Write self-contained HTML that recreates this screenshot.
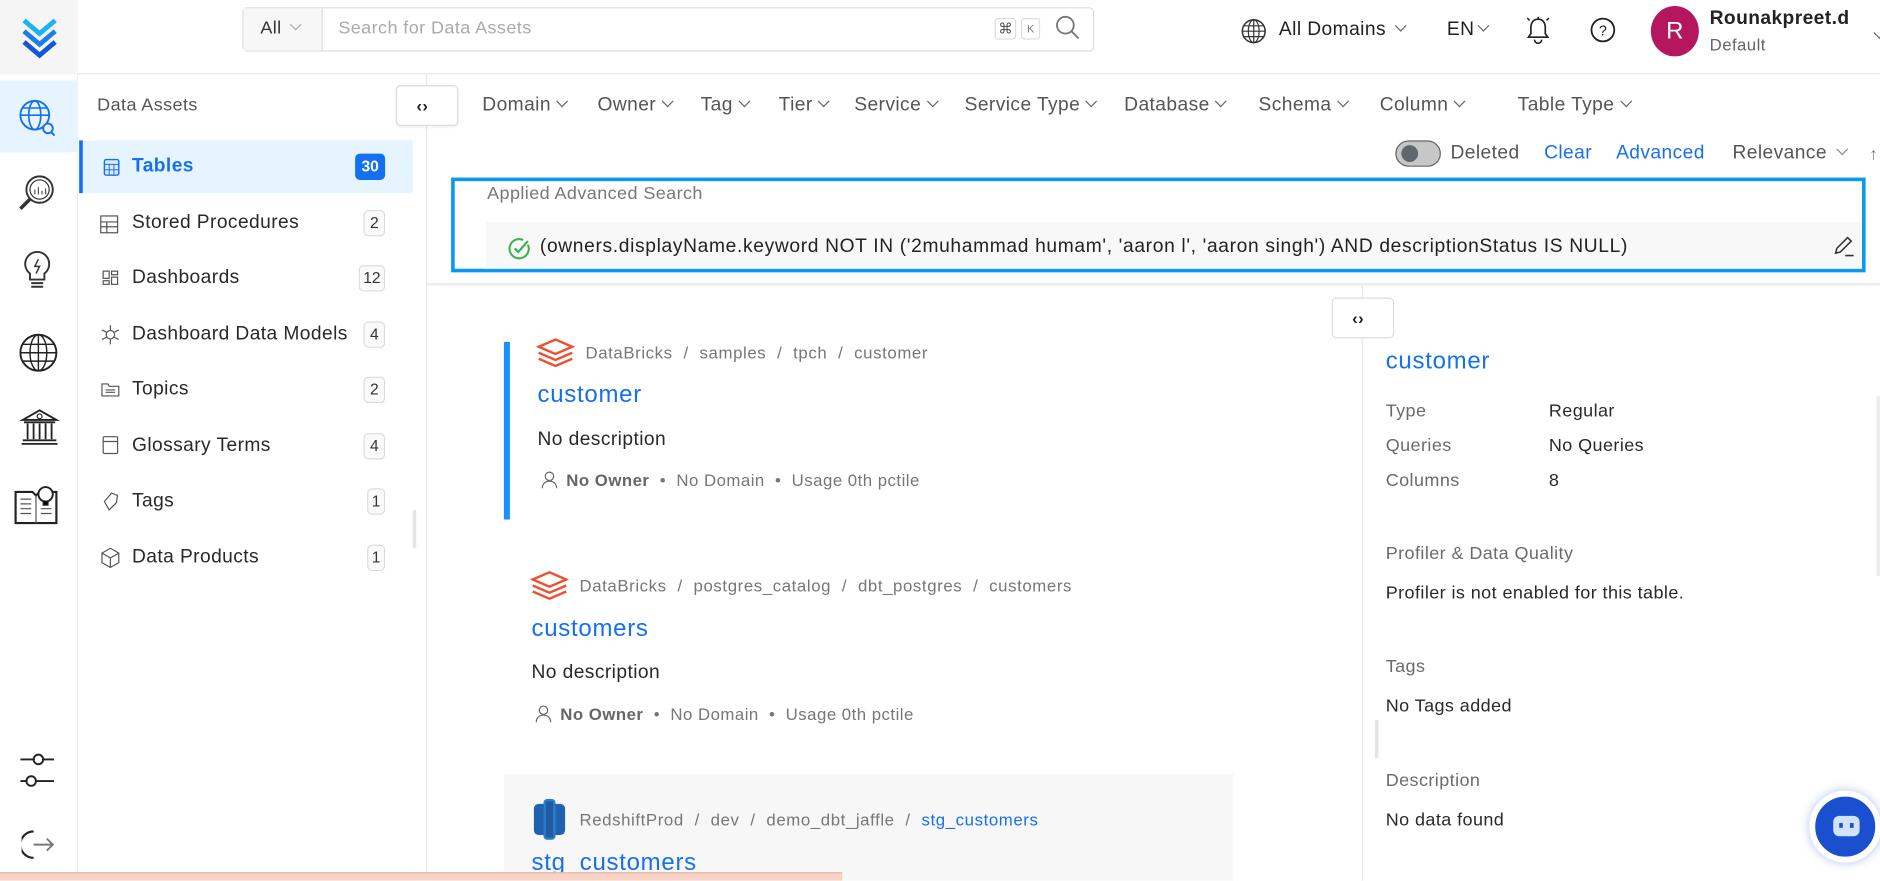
<!DOCTYPE html>
<html><head><meta charset="utf-8">
<style>
*{margin:0;padding:0;box-sizing:border-box}
html,body{width:1880px;height:880px;overflow:hidden;background:#fff}
#s{position:absolute;left:0;top:0;width:1567px;height:734px;transform:scale(1.19975);transform-origin:0 0;font-family:"Liberation Sans",sans-serif;color:#292929;background:#fff}
.a{position:absolute;white-space:nowrap;line-height:20px;letter-spacing:.35px}
.f{font-size:16px;color:#555}
.chev{display:inline-block;width:7px;height:7px;border-right:1.4px solid #666;border-bottom:1.4px solid #666;transform:rotate(45deg);margin-left:6px;position:relative;top:-4px}
.badge{position:absolute;left:303px;width:18px;height:22px;border:1px solid #ddd;border-radius:4px;font-size:13px;text-align:center;line-height:20px;background:#fafafa;color:#333;letter-spacing:0}
.mi{font-size:16px;color:#292929;left:110px}
.bc{font-size:14px;color:#777;letter-spacing:.5px}
.bc i{font-style:normal;margin:0 9px}
.ttl{font-size:20px;color:#1570ef;letter-spacing:.6px}
.meta{font-size:14px;color:#777;letter-spacing:.4px}
.lab{font-size:15px;color:#6b6b6b;left:1155px}
.val{font-size:15px;color:#292929}
svg{position:absolute}
</style></head><body><div id="s">
<!-- rail -->
<div style="position:absolute;left:0;top:0;width:65px;height:734px;background:#fff;border-right:1px solid #eee"></div>
<div style="position:absolute;left:0;top:0;width:65px;height:62px;background:#f5f5f5"></div>
<div style="position:absolute;left:0;top:67px;width:65px;height:60px;background:#e6f4ff"></div>
<svg style="left:13px;top:7px" width="40" height="46" viewBox="0 0 40 46"><path d="M7 10l13 11 13-11" stroke="#1ab4f5" stroke-width="4" fill="none"/><path d="M7 19l13 11 13-11" stroke="#1b7fe8" stroke-width="4" fill="none"/><path d="M7 28l13 11 13-11" stroke="#1456d6" stroke-width="4" fill="none"/></svg>
<svg style="left:14px;top:80px" width="34" height="36" viewBox="0 0 34 36"><circle cx="15" cy="16" r="12" stroke="#1570ef" stroke-width="1.6" fill="none"/><ellipse cx="15" cy="16" rx="5" ry="12" stroke="#1570ef" stroke-width="1.4" fill="none"/><path d="M3 16h24M5 10h20" stroke="#1570ef" stroke-width="1.3"/><circle cx="26" cy="27" r="4" stroke="#1570ef" stroke-width="1.6" fill="#e6f4ff"/><path d="M28.5 30l3 3" stroke="#1570ef" stroke-width="1.6"/></svg>
<svg style="left:12px;top:143px" width="36" height="36" viewBox="0 0 36 36"><circle cx="21" cy="15" r="11" stroke="#333" stroke-width="1.6" fill="none"/><circle cx="21" cy="15" r="8" stroke="#333" stroke-width="1" fill="none"/><path d="M17 19v-4M20 19v-6M23 19v-3M26 19v-5" stroke="#555"/><path d="M13 23l-8 8" stroke="#333" stroke-width="3"/></svg>
<svg style="left:18px;top:208px" width="26" height="36" viewBox="0 0 26 36"><path d="M13 2a10 10 0 0 0-6 18v5h12v-5A10 10 0 0 0 13 2z" stroke="#333" stroke-width="1.6" fill="none"/><path d="M14 8l-3 6h4l-3 6" stroke="#333" stroke-width="1.2" fill="none"/><path d="M8 28h10M8 31h10" stroke="#333" stroke-width="1.6"/></svg>
<svg style="left:14px;top:276px" width="36" height="36" viewBox="0 0 36 36"><circle cx="18" cy="18" r="15" stroke="#222" stroke-width="1.6" fill="none"/><ellipse cx="18" cy="18" rx="7" ry="15" stroke="#222" stroke-width="1.2" fill="none"/><path d="M3 18h30M5 11h26M5 25h26M18 3v30" stroke="#222" stroke-width="1.2"/></svg>
<svg style="left:16px;top:338px" width="34" height="36" viewBox="0 0 34 36"><path d="M3 12L17 4l14 8z" stroke="#222" stroke-width="1.6" fill="none"/><circle cx="17" cy="9" r="2" stroke="#222" fill="none"/><path d="M4 14h26M7 15v13M12 15v13M17 15v13M22 15v13M27 15v13M3 29h28M2 32h30" stroke="#222" stroke-width="1.5"/></svg>
<svg style="left:10px;top:400px" width="40" height="40" viewBox="0 0 40 40"><path d="M3 10h14l3 3 3-3h14v26H3z" stroke="#222" stroke-width="1.8" fill="none"/><path d="M20 13v23M7 16h9M7 20h9M7 24h9M7 28h9M24 24h9M24 28h9" stroke="#555"/><circle cx="28" cy="12" r="6" stroke="#222" stroke-width="1.6" fill="#fff"/><path d="M26 18v3h4v-3" stroke="#222"/></svg>
<svg style="left:15px;top:625px" width="32" height="34" viewBox="0 0 32 34"><path d="M2 8h12M20 8h10M2 26h6M14 26h16" stroke="#222" stroke-width="1.6"/><circle cx="17" cy="8" r="4" stroke="#222" stroke-width="1.6" fill="none"/><circle cx="11" cy="26" r="4" stroke="#222" stroke-width="1.6" fill="none"/></svg>
<svg style="left:18px;top:690px" width="30" height="28" viewBox="0 0 30 28"><path d="M10 3a11 11 0 0 0 0 22" stroke="#222" stroke-width="1.8" fill="none"/><path d="M10 14h16M21 9l5 5-5 5" stroke="#777" stroke-width="1.6" fill="none"/></svg>

<!-- header -->
<div style="position:absolute;left:65px;top:61px;width:1503px;height:1px;background:#e8e8e8"></div>
<div style="position:absolute;left:202px;top:6px;width:710px;height:37px;border:1px solid #ddd;border-radius:4px"></div>
<div style="position:absolute;left:203px;top:7px;width:66px;height:35px;background:#f7f7f7;border-right:1px solid #ddd"></div>
<div class="a" style="left:217px;top:14px;font-size:15px;color:#333">All<span class="chev" style="border-color:#aaa;margin-left:8px"></span></div>
<div class="a" style="left:282px;top:14px;font-size:15px;color:#aaa">Search for Data Assets</div>
<div style="position:absolute;left:829px;top:15px;width:18px;height:18px;border:1px solid #ddd;border-radius:3px;font-size:12px;text-align:center;line-height:16px;color:#555">⌘</div>
<div style="position:absolute;left:851px;top:15px;width:16px;height:18px;border:1px solid #ddd;border-radius:3px;font-size:9px;text-align:center;line-height:16px;color:#777">K</div>
<svg style="left:879px;top:12px" width="22" height="22" viewBox="0 0 22 22"><circle cx="9" cy="9" r="7" stroke="#777" stroke-width="1.5" fill="none"/><path d="M14 14l6 6" stroke="#777" stroke-width="1.5"/></svg>
<svg style="left:1034px;top:15px" width="22" height="22" viewBox="0 0 22 22"><circle cx="11" cy="11" r="9.5" stroke="#333" stroke-width="1.3" fill="none"/><ellipse cx="11" cy="11" rx="4.5" ry="9.5" stroke="#333" fill="none"/><path d="M1.5 11h19M3 6.5h16M3 15.5h16M11 1.5v19" stroke="#333"/></svg>
<div class="a" style="left:1066px;top:15px;font-size:16px;color:#222">All Domains<span class="chev" style="margin-left:9px"></span></div>
<div class="a" style="left:1206px;top:15px;font-size:16px;color:#222">EN<span class="chev" style="margin-left:4px"></span></div>
<svg style="left:1271px;top:13px" width="22" height="24" viewBox="0 0 22 24"><path d="M11 3c-4 0-6 3-6 7v5l-2 3h16l-2-3v-5c0-4-2-7-6-7z" stroke="#222" stroke-width="1.4" fill="none"/><path d="M8 20a3 3 0 0 0 6 0M11 1v2M4 4l-2-2M18 4l2-2" stroke="#222" stroke-width="1.3" fill="none"/></svg>
<svg style="left:1325px;top:14px" width="22" height="22" viewBox="0 0 22 22"><circle cx="11" cy="11" r="9.5" stroke="#222" stroke-width="1.5" fill="none"/><text x="11" y="15.5" font-size="12" text-anchor="middle" font-family="Liberation Sans" fill="#222">?</text></svg>
<div style="position:absolute;left:1376px;top:5px;width:40px;height:42px;border-radius:50%;background:#b5175f;color:#fff;font-size:20px;text-align:center;line-height:42px">R</div>
<div class="a" style="left:1425px;top:6px;font-size:16px;font-weight:bold;color:#222">Rounakpreet.d</div>
<div class="a" style="left:1425px;top:27px;font-size:14px;color:#666">Default</div>
<span class="chev" style="position:absolute;left:1557px;top:24px"></span>

<!-- left panel -->
<div style="position:absolute;left:355px;top:62px;width:1px;height:672px;background:#e8e8e8"></div>
<div class="a" style="left:81px;top:78px;font-size:15px;color:#555">Data Assets</div>
<div style="position:absolute;left:66px;top:117px;width:278px;height:44px;background:#e6f4ff;border-left:3px solid #1570ef"></div>
<svg style="left:86px;top:132px" width="14" height="15" viewBox="0 0 14 15"><rect x="1" y="1" width="12" height="13" rx="1.5" stroke="#1570ef" stroke-width="1.2" fill="#dbeafe"/><path d="M1 5h12M5 5v9M9 5v9M1 9.5h12" stroke="#1570ef" stroke-width=".8"/></svg>
<div class="a mi" style="top:129px;color:#1570ef;font-weight:bold">Tables</div>
<div class="badge" style="left:296px;top:128px;width:25px;background:#1570ef;border-color:#1570ef;color:#fff;font-weight:bold">30</div>
<div class="a mi" style="top:176px">Stored Procedures</div><div class="badge" style="top:175px">2</div>
<div class="a mi" style="top:222px">Dashboards</div><div class="badge" style="left:299px;width:22px;top:221px">12</div>
<div class="a mi" style="top:269px">Dashboard Data Models</div><div class="badge" style="top:268px">4</div>
<div class="a mi" style="top:315px">Topics</div><div class="badge" style="top:314px">2</div>
<div class="a mi" style="top:362px">Glossary Terms</div><div class="badge" style="top:361px">4</div>
<div class="a mi" style="top:408px">Tags</div><div class="badge" style="left:306px;width:15px;top:407px">1</div>
<div class="a mi" style="top:455px">Data Products</div><div class="badge" style="left:306px;width:15px;top:454px">1</div>
<svg style="left:82px;top:176px" width="20" height="300" viewBox="0 0 20 300" stroke="#555" fill="none" stroke-width="1">
<rect x="2" y="4" width="14" height="14"/><path d="M2 9h14M2 13h14M7 9v9"/>
<rect x="4" y="50" width="5" height="6"/><rect x="11" y="50" width="5" height="3"/><rect x="4" y="58" width="5" height="3"/><rect x="11" y="55" width="5" height="6"/>
<circle cx="10" cy="103" r="3.5"/><path d="M10 95v4M10 107v4M3 99l4 2M17 99l-4 2M3 107l4-2M17 107l-4-2"/>
<path d="M3 144h5l1 2h8v8H3z"/><path d="M6 149h8M6 151h8"/>
<rect x="4" y="188" width="12" height="14" rx="1"/><path d="M4 192h12"/>
<path d="M5 242l6-7 5 2-1 6-6 6z"/>
<path d="M3 285l7-4 7 4v8l-7 4-7-4z M3 285l7 4 7-4M10 289v8"/>
</svg>
<div style="position:absolute;left:344px;top:425px;width:3px;height:32px;background:#e5e5e5;border-radius:2px"></div>

<!-- toggle button -->
<div style="position:absolute;left:330px;top:71px;width:52px;height:34px;border:1px solid #ddd;border-radius:4px;background:#fff;box-shadow:0 1px 2px rgba(0,0,0,.06)"></div>
<div class="a" style="left:347px;top:78px;font-size:14px;font-weight:bold;color:#222">‹›</div>

<!-- filters -->
<div class="a f" style="left:402px;top:78px">Domain<span class="chev"></span></div>
<div class="a f" style="left:498px;top:78px">Owner<span class="chev"></span></div>
<div class="a f" style="left:584px;top:78px">Tag<span class="chev"></span></div>
<div class="a f" style="left:649px;top:78px">Tier<span class="chev"></span></div>
<div class="a f" style="left:712px;top:78px">Service<span class="chev"></span></div>
<div class="a f" style="left:804px;top:78px">Service Type<span class="chev"></span></div>
<div class="a f" style="left:937px;top:78px">Database<span class="chev"></span></div>
<div class="a f" style="left:1049px;top:78px">Schema<span class="chev"></span></div>
<div class="a f" style="left:1150px;top:78px">Column<span class="chev"></span></div>
<div class="a f" style="left:1265px;top:78px">Table Type<span class="chev"></span></div>

<div style="position:absolute;left:1163px;top:117px;width:38px;height:22px;border-radius:11px;background:#c7c7c7;border:1.5px solid #666"></div>
<div style="position:absolute;left:1168px;top:121px;width:14px;height:14px;border-radius:50%;background:#5f6670"></div>
<div class="a f" style="left:1209px;top:118px">Deleted</div>
<div class="a" style="left:1287px;top:118px;font-size:16px;color:#1570ef">Clear</div>
<div class="a" style="left:1347px;top:118px;font-size:16px;color:#1570ef">Advanced</div>
<div class="a f" style="left:1444px;top:118px">Relevance<span class="chev" style="margin-left:9px;border-color:#888"></span></div>
<div class="a" style="left:1558px;top:118px;font-size:14px;color:#777">↑</div>

<!-- advanced search box -->
<div style="position:absolute;left:376px;top:148px;width:1179px;height:79px;border:3px solid #0b98f0"></div>
<div class="a" style="left:406px;top:152px;font-size:15px;color:#777">Applied Advanced Search</div>
<div style="position:absolute;left:405px;top:185px;width:1147px;height:39px;background:#f8f8f8"></div>
<svg style="left:423px;top:197px" width="20" height="20" viewBox="0 0 20 20"><path d="M17 7a8 8 0 1 1-4-4" stroke="#3db24b" stroke-width="1.7" fill="none"/><path d="M6 10l3 3 8-9" stroke="#3db24b" stroke-width="1.8" fill="none"/></svg>
<div class="a" style="left:450px;top:196px;font-size:16px;color:#222;letter-spacing:.55px">(owners.displayName.keyword NOT IN ('2muhammad humam', 'aaron l', 'aaron singh') AND descriptionStatus IS NULL)</div>
<svg style="left:1527px;top:196px" width="20" height="20" viewBox="0 0 20 20"><path d="M3 15l1-4 9-9 3 3-9 9z" stroke="#333" stroke-width="1.3" fill="none"/><path d="M11 17h7" stroke="#333" stroke-width="1.3"/></svg>
<div style="position:absolute;left:355px;top:236px;width:1213px;height:2px;background:#ececec"></div>

<!-- cards -->
<div style="position:absolute;left:1135px;top:238px;width:1px;height:496px;background:#e8e8e8"></div>
<div style="position:absolute;left:1110px;top:248px;width:52px;height:34px;border:1px solid #ddd;border-radius:4px;background:#fff"></div>
<div class="a" style="left:1127px;top:255px;font-size:14px;font-weight:bold;color:#222">‹›</div>
<div style="position:absolute;left:1146px;top:600px;width:3px;height:32px;background:#e5e5e5"></div>

<div style="position:absolute;left:420px;top:285px;width:5px;height:148px;background:#1890ff"></div>
<svg style="left:447px;top:281px" width="32" height="28" viewBox="0 0 32 28" stroke="#ee4f30" stroke-width="2" fill="none"><path d="M2 8l14-6 14 6-14 6z"/><path d="M2 13l14 6 14-6M2 18l14 6 14-6"/></svg>
<div class="a bc" style="left:488px;top:284px">DataBricks<i>/</i>samples<i>/</i>tpch<i>/</i>customer</div>
<div class="a ttl" style="left:448px;top:319px">customer</div>
<div class="a" style="left:448px;top:357px;font-size:16px">No description</div>
<svg style="left:451px;top:392px" width="14" height="16" viewBox="0 0 14 16"><circle cx="7" cy="5" r="3.5" stroke="#666" fill="none"/><path d="M1 15c0-4 3-6 6-6s6 2 6 6" stroke="#666" fill="none"/></svg>
<div class="a meta" style="left:472px;top:390px"><b style="color:#666">No Owner</b> &nbsp;•&nbsp; No Domain &nbsp;•&nbsp; Usage 0th pctile</div>

<svg style="left:442px;top:475px" width="32" height="28" viewBox="0 0 32 28" stroke="#ee4f30" stroke-width="2" fill="none"><path d="M2 8l14-6 14 6-14 6z"/><path d="M2 13l14 6 14-6M2 18l14 6 14-6"/></svg>
<div class="a bc" style="left:483px;top:478px">DataBricks<i>/</i>postgres_catalog<i>/</i>dbt_postgres<i>/</i>customers</div>
<div class="a ttl" style="left:443px;top:514px">customers</div>
<div class="a" style="left:443px;top:551px;font-size:16px">No description</div>
<svg style="left:446px;top:587px" width="14" height="16" viewBox="0 0 14 16"><circle cx="7" cy="5" r="3.5" stroke="#666" fill="none"/><path d="M1 15c0-4 3-6 6-6s6 2 6 6" stroke="#666" fill="none"/></svg>
<div class="a meta" style="left:467px;top:585px"><b style="color:#666">No Owner</b> &nbsp;•&nbsp; No Domain &nbsp;•&nbsp; Usage 0th pctile</div>

<div style="position:absolute;left:420px;top:645px;width:608px;height:89px;background:#f7f7f7"></div>
<svg style="left:444px;top:666px" width="28" height="34" viewBox="0 0 28 34"><rect x="1" y="4" width="26" height="26" rx="4" fill="#1f63b0"/><rect x="9" y="0" width="10" height="34" rx="3" fill="#2b7bd0"/><rect x="11" y="2" width="6" height="30" fill="#205b9e"/></svg>
<div class="a bc" style="left:483px;top:673px">RedshiftProd<i>/</i>dev<i>/</i>demo_dbt_jaffle<i>/</i><span style="color:#1570ef">stg_customers</span></div>
<div class="a ttl" style="left:443px;top:709px">stg_customers</div>

<!-- right panel -->
<div class="a ttl" style="left:1155px;top:291px">customer</div>
<div class="a lab" style="top:333px">Type</div><div class="a val" style="left:1291px;top:333px">Regular</div>
<div class="a lab" style="top:362px">Queries</div><div class="a val" style="left:1291px;top:362px">No Queries</div>
<div class="a lab" style="top:391px">Columns</div><div class="a val" style="left:1291px;top:391px">8</div>
<div class="a lab" style="top:452px">Profiler &amp; Data Quality</div>
<div class="a val" style="left:1155px;top:485px">Profiler is not enabled for this table.</div>
<div class="a lab" style="top:546px">Tags</div>
<div class="a val" style="left:1155px;top:579px">No Tags added</div>
<div class="a lab" style="top:641px">Description</div>
<div class="a val" style="left:1155px;top:674px">No data found</div>
<div style="position:absolute;left:1564px;top:330px;width:3px;height:150px;background:#eee"></div>

<div style="position:absolute;left:1508px;top:659px;width:60px;height:60px;border-radius:50%;background:#1a4fd0;border:5px solid #fff;box-shadow:0 0 8px rgba(30,80,200,.35)"></div>
<div style="position:absolute;left:1528px;top:680px;width:22px;height:17px;border-radius:5px;background:#cfe3ff"></div>
<div style="position:absolute;left:1533px;top:686px;width:3px;height:4px;background:#1a4fd0"></div>
<div style="position:absolute;left:1542px;top:686px;width:3px;height:4px;background:#1a4fd0"></div>

<div style="position:absolute;left:0;top:727px;width:702px;height:7px;background:#f8d3c6;border-top:1px solid #e7b5a5"></div>
</div></body></html>
